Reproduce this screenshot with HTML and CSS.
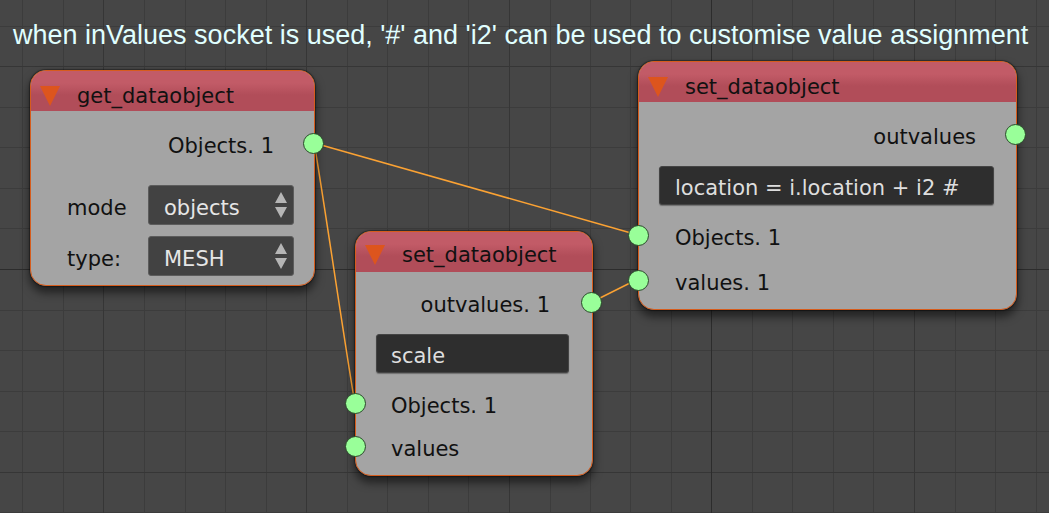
FILE: index.html
```html
<!DOCTYPE html>
<html lang="en">
<head>
<meta charset="utf-8">
<title>Node editor</title>
<link rel="stylesheet" href="styles.css">
</head>
<body>
<main class="canvas">
  <svg class="backdrop" aria-hidden="true">
    <g class="grid-minor">
      <path d="M22.5 0V2000M63.500 0V2000M144.500 0V2000M185.500 0V2000M225.500 0V2000M266.500 0V2000M347.500 0V2000M387.500 0V2000M428.500 0V2000M468.500 0V2000M550.500 0V2000M590.500 0V2000M630.500 0V2000M671.500 0V2000M752.500 0V2000M792.500 0V2000M833.500 0V2000M873.500 0V2000M955.500 0V2000M995.500 0V2000M1036.500 0V2000"/>
      <path d="M0 26.500H3000M0 107.500H3000M0 147.500H3000M0 188.500H3000M0 228.500H3000M0 310.500H3000M0 350.500H3000M0 391.500H3000M0 431.500H3000M0 512.500H3000"/>
    </g>
    <path class="grid-major" d="M103.500 0V2000M306.500 0V2000M509.500 0V2000M914.500 0V2000M0 66.500H3000M0 472.500H3000"/>
    <path class="grid-axis" d="M711.500 0V2000M0 269.500H3000"/>
    <g class="wires">
      <path d="M314 143L638 235"/>
      <path d="M314 143C318 160 350 380 355 403"/>
      <path d="M592 302L638 279"/>
    </g>
  </svg>

  <h1 class="note">when inValues socket is used, '#' and 'i2' can be used to customise value assignment</h1>

  <section class="node node-get">
    <header class="node-head">
      <button class="fold" type="button" aria-label="Collapse node"><svg class="fold-icon" viewBox="0 0 20 20"><path d="M0 0H20L10 20Z"/></svg></button>
      <h2 class="node-title">get_dataobject</h2>
    </header>
    <div class="node-body">
      <div class="row row-out">Objects. 1<i class="socket socket-out"></i></div>
      <div class="fields">
        <label class="field-label" for="mode">mode</label>
        <div class="picker">
          <select class="picker-box" id="mode"><option>objects</option></select>
          <svg class="picker-arrows" viewBox="0 0 12 26"><path d="M0 11L6 0L12 11ZM0 15H12L6 26Z"/></svg>
        </div>
        <label class="field-label" for="type">type:</label>
        <div class="picker">
          <select class="picker-box" id="type"><option>MESH</option></select>
          <svg class="picker-arrows" viewBox="0 0 12 26"><path d="M0 11L6 0L12 11ZM0 15H12L6 26Z"/></svg>
        </div>
      </div>
    </div>
  </section>

  <section class="node node-scale">
    <header class="node-head">
      <button class="fold" type="button" aria-label="Collapse node"><svg class="fold-icon" viewBox="0 0 20 20"><path d="M0 0H20L10 20Z"/></svg></button>
      <h2 class="node-title">set_dataobject</h2>
    </header>
    <div class="node-body">
      <div class="row row-out">outvalues. 1<i class="socket socket-out"></i></div>
      <input class="formula" type="text" aria-label="Expression" value="scale">
      <div class="row">Objects. 1<i class="socket socket-in"></i></div>
      <div class="row">values<i class="socket socket-in"></i></div>
    </div>
  </section>

  <section class="node node-location">
    <header class="node-head">
      <button class="fold" type="button" aria-label="Collapse node"><svg class="fold-icon" viewBox="0 0 20 20"><path d="M0 0H20L10 20Z"/></svg></button>
      <h2 class="node-title">set_dataobject</h2>
    </header>
    <div class="node-body">
      <div class="row row-out">outvalues<i class="socket socket-out"></i></div>
      <input class="formula" type="text" aria-label="Expression" value="location = i.location + i2 #">
      <div class="row">Objects. 1<i class="socket socket-in"></i></div>
      <div class="row">values. 1<i class="socket socket-in"></i></div>
    </div>
  </section>
</main>
</body>
</html>
```
FILE: styles.css
```css
* { box-sizing: border-box; }

body {
  margin: 0;
  background: #464646;
  font-family: "DejaVu Sans", sans-serif;
  font-size: 21px;
  line-height: 24px;
  color: #111;
}

.canvas {
  position: relative;
  min-height: 100vh;
  overflow: hidden;
}

.backdrop {
  position: absolute;
  inset: 0;
  width: 100%;
  height: 100%;
}

.backdrop path { fill: none; stroke-width: 1; }
.grid-minor { stroke: #3c3c3c; }
.grid-major { stroke: #363636; }
.grid-axis { stroke: #2c2c2c; }
.wires { stroke: #fba233; }
.backdrop .wires path { stroke-width: 1.5; }

.note {
  position: relative;
  margin: 0;
  padding: 19px 13px 0;
  font: 400 27px/32px "Liberation Sans", sans-serif;
  color: #e0ffff;
  white-space: nowrap;
}

/* Nodes sit freely on the canvas */
.node {
  position: absolute;
  border: 1px solid #d65c1c;
  border-radius: 16px;
  background: rgba(166, 166, 166, 0.98);
  box-shadow: 0 0 1px 1px rgba(0, 0, 0, 0.35), 0 6px 8px 1px rgba(0, 0, 0, 0.5);
}

.node-get { left: 30px; top: 70px; width: 285px; }
.node-scale { left: 355px; top: 231px; width: 238px; }
.node-location { left: 638px; top: 61px; width: 379px; }

.node-head {
  display: flex;
  align-items: center;
  gap: 17px;
  height: 40px;
  padding: 9px 9px 0;
  border-radius: 15px 15px 0 0;
  background: linear-gradient(#c25b67 0 12px, #b14d59 24px);
}

.fold {
  display: flex;
  padding: 0;
  border: 0;
  background: none;
}

.fold-icon { width: 20px; height: 20px; fill: #dd551d; }

.node-title {
  margin: 0;
  font-size: 21px;
  font-weight: 400;
}

.node-body { padding: 14px 0 4px; }

.row {
  position: relative;
  display: flex;
  align-items: center;
  height: 45px;
  padding: 0 36px;
}

.row-out {
  justify-content: flex-end;
  height: 42px;
  padding: 0 40px;
}

.node-scale .node-head { padding-top: 6px; }
.node-scale .node-body { padding: 13px 0 5px; }
.node-scale .row { height: 43px; padding: 0 35px; }
.node-scale .row-out { height: 40px; padding: 0 42px; }

.socket {
  position: absolute;
  top: calc(50% - 13px);
  width: 21px;
  height: 21px;
  border: 1px solid #2b4a2b;
  border-radius: 50%;
  background: #99ff99;
}

.socket-in { left: -11px; }
.socket-out { right: -10px; }

.formula {
  display: block;
  width: calc(100% - 42px);
  height: 39px;
  margin: 8px 22px 10px 20px;
  padding: 4px 15px 0;
  border: 1px solid #444;
  border-radius: 3px;
  background: #2e2e2e;
  box-shadow: 0 1px 1px rgba(60, 60, 60, 0.5);
  font: 400 21px "DejaVu Sans", sans-serif;
  color: #dedede;
}

.node-scale .formula {
  width: calc(100% - 43px);
  margin: 9px 20px 11px;
  padding: 4px 14px 0;
}

.fields {
  display: grid;
  grid-template-columns: 81px 1fr;
  row-gap: 11px;
  align-items: center;
  padding: 18px 20px 5px 36px;
}

.field-label { padding-top: 5px; }

.picker { position: relative; }

.picker-box {
  display: block;
  width: 100%;
  height: 40px;
  padding: 5px 32px 0 15px;
  appearance: none;
  border: 1px solid #5c5c5c;
  border-radius: 3px;
  background: #424242;
  font: 400 21px "DejaVu Sans", sans-serif;
  color: #e6e6e6;
}

.picker-arrows {
  position: absolute;
  right: 7px;
  top: 7px;
  width: 12px;
  height: 26px;
  fill: #b5b5b5;
  pointer-events: none;
}
```
